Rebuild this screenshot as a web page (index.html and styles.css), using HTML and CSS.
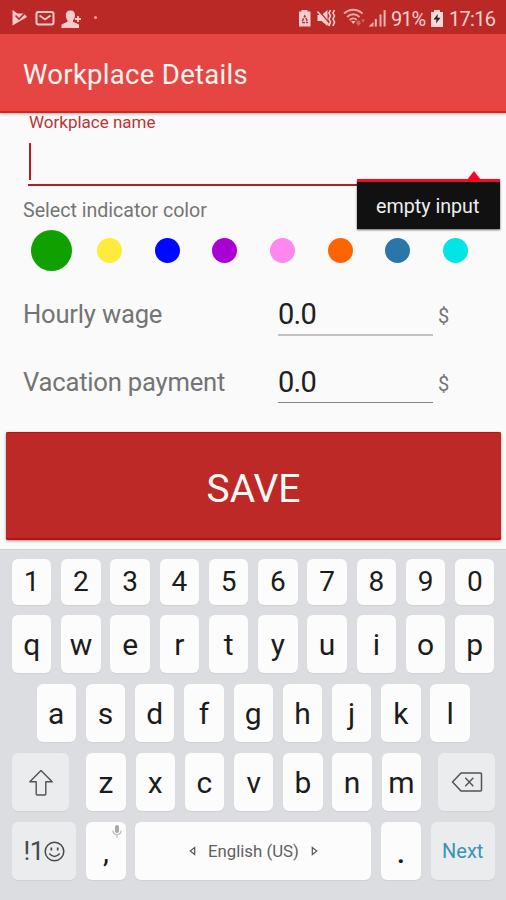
FILE: index.html
```html
<!DOCTYPE html>
<html lang="en">
<head>
<meta charset="utf-8">
<title>Workplace Details</title>
<link rel="stylesheet" href="styles.css">
</head>
<body>
<header>
  <div class="status">
    <svg class="notes" width="90" height="34" viewBox="0 0 90 34">
      <path fill="#f9cccc" d="M12.500 10l5 3.500h6.500l3 3.500-14.500 8.500z"/>
      <path d="M15.500 15.500l3.500 3.500 6.500-6.500" fill="none" stroke="#bb2927" stroke-width="1.600"/>
      <rect x="36.500" y="12" width="17" height="12.500" rx="2" fill="none" stroke="#f9cccc" stroke-width="2"/>
      <path d="M39.500 15.500l5.500 4 5.500-4" fill="none" stroke="#f9cccc" stroke-width="1.800"/>
      <path fill="#f9cccc" d="M70.500 10.500c3 0 4.500 2 4.500 4.800 0 2-1 4-2 5v1.500l6 2.700V28H61.500v-3.500l6-2.700v-1.500c-1-1-1.700-3-1.700-5 0-2.800 1.700-4.800 4.700-4.800z"/>
      <path stroke="#f9cccc" stroke-width="1.800" d="M75 19h6M78 16v6"/>
    </svg>
    <span class="dot"></span>
    <svg class="signals" width="92" height="34" viewBox="298 0 92 34">
      <path fill="#f9d0cf" d="M301.500 10h6v1.500h3v15H299v-15h2.500z"/>
      <path d="M302.300 21l2.500-5 2.500 5M302 22.500h6" fill="none" stroke="#bb2927" stroke-width="1.500" stroke-dasharray="3 1"/>
      <path fill="#f9d0cf" d="M317.500 15h4l6-5v16l-6-5h-4z"/>
      <path d="M318.500 10.500l12 14" stroke="#bb2927" stroke-width="1.500"/>
      <path d="M317.500 11.500l12 14" stroke="#f9d0cf" stroke-width="1.600"/>
      <path d="M330.500 10l-1.500 3 1.500 3-1.500 3 1.500 3-1.500 4M334.500 10l-1.500 3 1.500 3-1.500 3 1.500 3-1.500 4" fill="none" stroke="#f9d0cf" stroke-width="1.600"/>
      <path d="M344 13.500c5.500-5 13-5 18.500 0M347 17c4-3.500 8.500-3.500 12.500 0M349.700 20c2-2 5-2 7 0" fill="none" stroke="#f2aaa6" stroke-width="1.900"/>
      <path fill="#f9d0cf" d="M351 21h4.500l-2.200 3z"/>
      <path fill="#d8675a" d="M356 23l2.500-3 2.500 3-2.500 3zM361 19.500h4l-2 3z"/>
      <path fill="#f4b4b0" d="M368.500 26.500l5-4.500v4.500zM374.800 19h2v7.500h-2zM379.500 14.500h2V26.500h-2zM383.600 10h2v16.500h-2z"/>
    </svg>
    <span class="percent">91%</span>
    <svg class="battery" width="12" height="17" viewBox="0 0 12 17">
      <path fill="#fbd8d7" d="M3 0h6v2h3v15H0V2h3z"/>
      <path fill="#272027" d="M6.800 4L2.500 9.500h3L5 13.500l4.500-5.700h-3z"/>
    </svg>
    <span class="clock">17:16</span>
  </div>
  <div class="appbar"><h1>Workplace Details</h1></div>
</header>
<main>
  <div class="namefield">
    <div class="label"><span>Workplace name</span></div>
    <div class="input"><i class="caret"></i></div>
    <div class="tooltip"><span>empty input</span></div>
  </div>
  <div class="pick"><span>Select indicator color</span></div>
  <div class="colors">
    <i class="green"></i><i class="yellow"></i><i class="blue"></i><i class="purple"></i><i class="pink"></i><i class="orange"></i><i class="steel"></i><i class="cyan"></i>
  </div>
  <div class="row"><span class="name wage">Hourly wage</span><span class="amount soft">0.0</span><span class="unit">$</span></div>
  <div class="row"><span class="name">Vacation payment</span><span class="amount">0.0</span><span class="unit">$</span></div>
  <button class="save">SAVE</button>
</main>
<section class="keyboard">
  <div class="keys digits"><b>1</b><b>2</b><b>3</b><b>4</b><b>5</b><b>6</b><b>7</b><b>8</b><b>9</b><b>0</b></div>
  <div class="keys"><b>q</b><b>w</b><b>e</b><b>r</b><b>t</b><b>y</b><b>u</b><b>i</b><b>o</b><b>p</b></div>
  <div class="keys middle"><b>a</b><b>s</b><b>d</b><b>f</b><b>g</b><b>h</b><b>j</b><b>k</b><b>l</b></div>
  <div class="keys edges">
    <b class="fn shift"><svg width="26" height="27" viewBox="0 0 26 27"><path d="M13 1.500L24.200 12.800h-6.400V25q0 1-1 1H9.200q-1 0-1-1V12.800H1.800z" fill="none" stroke="#505254" stroke-width="1.400" stroke-linejoin="round"/></svg></b>
    <div class="keys"><b>z</b><b>x</b><b>c</b><b>v</b><b>b</b><b>n</b><b>m</b></div>
    <b class="fn shift"><svg width="32" height="20" viewBox="0 0 32 20"><path d="M10 1h19.500q1 0 1 1v16q0 1-1 1H10L1.500 10z" fill="none" stroke="#505254" stroke-width="1.500" stroke-linejoin="round"/><path d="M14.300 5.800l8 8.400M22.300 5.800l-8 8.400" stroke="#505254" stroke-width="1.400"/></svg></b>
  </div>
  <div class="keys">
    <b class="fn wide symbols"><span>!1</span><svg width="21" height="21" viewBox="0 0 21 21"><circle cx="10.500" cy="10.500" r="9.300" fill="none" stroke="#47494b" stroke-width="1.500"/><path d="M5.300 12.500q5.200 6 10.400 0" fill="none" stroke="#47494b" stroke-width="1.400"/><path d="M7.300 6.500v3M13.700 6.500v3" stroke="#47494b" stroke-width="1.700"/></svg></b>
    <b class="comma">,<svg class="mic" width="10" height="13" viewBox="0 0 10 13"><rect x="3" y="0" width="4" height="8" rx="2" fill="#aaa"/><path d="M1 5.500q0 4 4 4t4-4M5 9.500V13" fill="none" stroke="#bbb" stroke-width="1.200"/></svg></b>
    <b class="space"><svg width="7" height="10" viewBox="0 0 7 10"><path d="M5.700 1.500v7L1.200 5z" fill="none" stroke="#555" stroke-width="1.200"/></svg><span>English (US)</span><svg width="7" height="10" viewBox="0 0 7 10"><path d="M1.300 1.500v7L5.800 5z" fill="none" stroke="#555" stroke-width="1.200"/></svg></b>
    <b class="period">.</b>
    <b class="fn wide next">Next</b>
  </div>
</section>
</body>
</html>
```
FILE: styles.css
```css
* { box-sizing: border-box; }
body {
  margin: 0;
  width: 506px;
  height: 900px;
  overflow: hidden;
  background: #fafafa;
  font-family: Roboto, "Liberation Sans", sans-serif;
  display: flex;
  flex-direction: column;
}
span, h1 { white-space: nowrap; }

header { height: 113px; border-bottom: 2px solid #d32619; box-shadow: 0 1px 3px rgba(0, 0, 0, .3); }
.status {
  height: 34px;
  background: #bb2927;
  color: #f9d3d1;
  display: flex;
  align-items: center;
}
.dot { width: 3px; height: 3px; margin-left: 4px; border-radius: 50%; background: #f3aca0; }
.signals { margin-left: 201px; }
.percent { margin-left: 1px; width: 35px; font-size: 20px; letter-spacing: -1px; line-height: 34px; padding-top: 3px; }
.battery { margin: 2px 0 0 5px; }
.clock { margin-left: 6px; font-size: 20px; letter-spacing: -.7px; line-height: 34px; padding-top: 3px; }
.appbar { height: 77px; padding-left: 23px; background: #e54643; }
h1 { margin: 0; font-size: 27.500px; font-weight: 400; line-height: 82px; color: #fff4f0; letter-spacing: .3px; }

main { height: 436px; display: flex; flex-direction: column; }
.namefield { position: relative; height: 73px; padding: 0 29px; }
.label { height: 20px; line-height: 18px; font-size: 17px; color: #b93636; }
.input { height: 53px; padding-top: 10px; margin-left: -1px; border-bottom: 2px solid #b91d22; }
.caret { display: block; width: 2px; height: 37px; margin-left: 1px; background: #b71c1c; }
.tooltip {
  position: absolute;
  left: 357px;
  top: 66px;
  width: 143px;
  height: 50px;
  padding-left: 19px;
  border-top: 3px solid #ef1025;
  background: #111;
  box-shadow: 0 1px 2px rgba(0, 0, 0, .6);
  color: #eee;
  font-size: 19.700px;
  line-height: 50px;
}
.tooltip::before {
  content: "";
  position: absolute;
  left: 110px;
  top: -11px;
  border: 7px solid transparent;
  border-top: 0;
  border-bottom: 9px solid #ff0028;
}
.pick { height: 44px; padding-left: 23px; font-size: 19.600px; line-height: 50px; color: #757575; }
.colors { height: 41px; padding-left: 31px; display: flex; align-items: center; gap: 32.700px; }
.colors i { width: 25px; height: 25px; border-radius: 50%; flex: none; }
.colors .green { width: 41px; height: 41px; margin-right: -7.700px; background: #10a000; }
.yellow { background: #ffeb3b; }
.blue { background: #0008ff; }
.purple { background: #aa00d4; }
.pink { background: #ff87ed; }
.orange { background: #ff6400; }
.steel { background: #2a76a9; }
.cyan { background: #00e5e5; }
.row { height: 68px; padding-left: 23px; display: flex; color: #747474; }
.name { width: 255px; padding-top: 24px; font-size: 25.600px; letter-spacing: -.2px; line-height: 38px; }
.amount {
  width: 155px;
  height: 64px;
  padding-top: 24px;
  border-bottom: 1px solid #858585;
  color: #202020;
  font-size: 29px;
  letter-spacing: -.7px;
  line-height: 38px;
}
.amount.soft { height: 65px; border-bottom: 2px solid #c0c0c0; }
.unit { margin-left: 5px; padding-top: 26px; font-size: 20px; line-height: 38px; }
.save {
  margin: 25px 5px 0 6px;
  height: 108px;
  padding: 6px 0 0;
  border: 0;
  border-radius: 2px;
  background: #bd2927;
  box-shadow: inset 0 1px #b71212, inset 0 -2px #bc1010, 0 1px 3px rgba(0, 0, 0, .4);
  color: #fff8f4;
  font: 39px Roboto, "Liberation Sans", sans-serif;
}

.keyboard {
  height: 351px;
  padding: 9px 11px 0 12px;
  border-top: 1px solid #cfd0d2;
  background: #dcdde0;
  display: flex;
  flex-direction: column;
  gap: 10.900px;
}
.keys { height: 58px; display: flex; gap: 9.900px; }
.keys b {
  width: 39.350px;
  flex: none;
  border-radius: 6px;
  background: #fcfcfc;
  box-shadow: 0 1px 1px rgba(0, 0, 0, .06);
  color: #1c1c1c;
  font-size: 30px;
  font-weight: 400;
  line-height: 59px;
  text-align: center;
}
.digits { height: 45.500px; }
.digits b { font-size: 28px; line-height: 46px; }
.middle { padding-left: 24.600px; }
.edges { gap: 17.300px; }
.keys .fn { background: #ebecee; display: flex; align-items: center; justify-content: center; }
.keys .shift { width: 57px; }
.keys .wide { width: 64.300px; }
.keys .symbols { color: #47494b; font-size: 26px; letter-spacing: -.5px; }
.keys .comma { position: relative; }
.keys .period { font-weight: 500; line-height: 62px; }
.mic { position: absolute; right: 4px; top: 3px; }
.keys .space {
  width: 236px;
  display: flex;
  align-items: center;
  justify-content: center;
  gap: 12px;
  color: #606060;
  font-size: 16.800px;
}
.keys .next { color: #3994b2; font-size: 20px; }
```
